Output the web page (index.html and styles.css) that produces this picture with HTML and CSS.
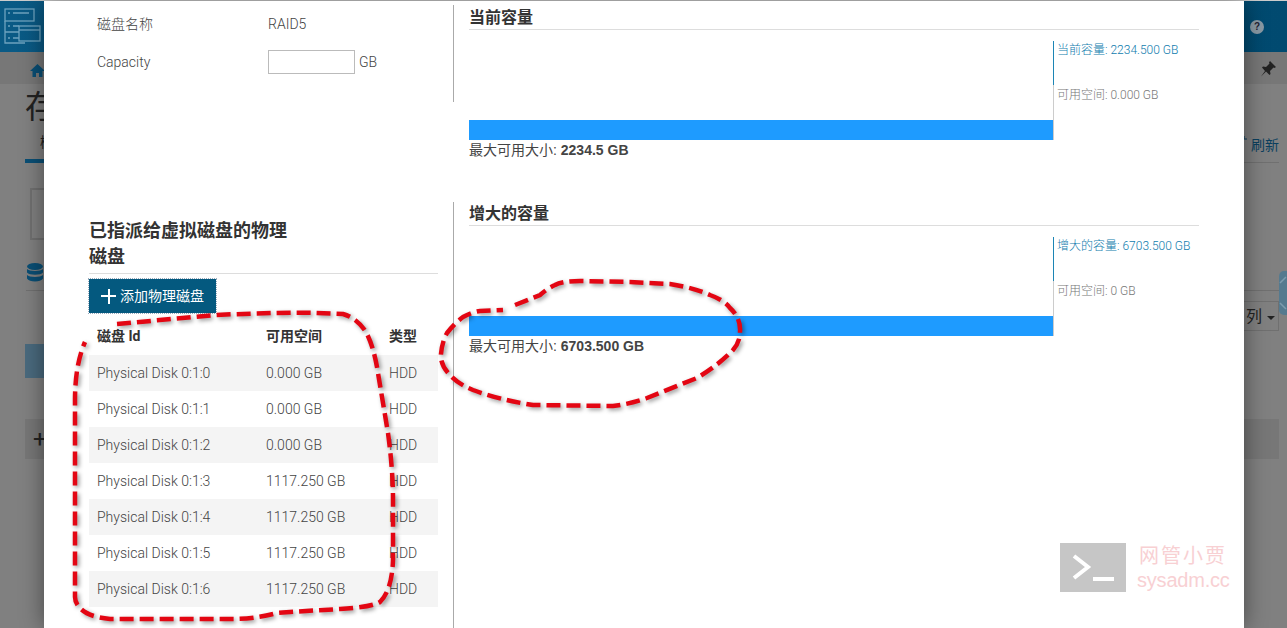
FILE: index.html
```html
<!DOCTYPE html>
<html lang="zh-CN">
<head>
<meta charset="utf-8">
<title>存储</title>
<link rel="stylesheet" href="styles.css">
</head>
<body>
<div class="page">
  <header class="topbar">
    <svg class="logo" width="38" height="38" viewBox="0 0 38 38" fill="none" stroke="#6ea3bf" stroke-width="1.3">
      <rect x="1" y="1" width="29" height="12"/><path d="M4 5h2M9 5h16" stroke-width="1.5"/>
      <path d="M1 13v11h14M1 24v11h20M4 18h2M9 18h6M4 30h2M9 30h6"/>
      <rect x="15" y="18" width="21" height="15"/><path d="M15 22h21"/>
    </svg>
    <span class="help">?</span>
  </header>
  <div class="crumbs">
    <svg class="home" width="15" height="15" viewBox="0 0 15 15"><path d="M7.500 1 0 8h2.500v6h3.500v-4h3v4h3.500V8H15z" fill="#0a4f75"/></svg>
    <svg class="pin" width="16" height="16" viewBox="0 0 16 16"><path d="M10 0l6 6-1.500 1-1-.5L10 10l.5 3-1 1-3.500-3.500L1 15.500l4-5.500L2 6.500l1-1 3 .5 3.500-3.500-.5-1z" fill="#222"/></svg>
  </div>
  <h1 class="page-title">存储</h1>
  <div class="tabs">
    <span class="tab">概览</span>
    <span class="refresh"><svg class="refresh-icon" width="5" height="8" viewBox="0 0 5 8" fill="none" stroke="#0a3f5e" stroke-width="1.200"><path d="M1 0v3h3"/></svg>刷新</span>
  </div>
  <div class="info-box"></div>
  <div class="section-head">
    <svg width="18" height="19" viewBox="0 0 18 19" fill="#0a4f75"><ellipse cx="9" cy="3.500" rx="8" ry="3.500"/><path d="M1 6c2 2.500 14 2.500 16 0v3.500c-2 3-14 3-16 0zM1 12c2 2.500 14 2.500 16 0v3.500c-2 4-14 4-16 0z"/></svg>
  </div>
  <div class="select-row"><span class="select">列<i class="caret"></i></span></div>
  <div class="primary-block"></div>
  <div class="add-bar">+</div>
  <div class="handle"><svg width="8" height="44" viewBox="0 0 8 44" fill="none" stroke="#7d9cae" stroke-width="1.500"><path d="M1 12l6-6M1 32l6 6"/></svg></div>
</div>

<main class="modal">
  <section class="form-panel">
    <div class="form-row"><span class="form-label">磁盘名称</span><span>RAID5</span></div>
    <div class="form-row"><span class="form-label">Capacity</span><input class="cap-input" type="text" aria-label="Capacity"><span class="unit">GB</span></div>
  </section>
  <section class="chart-panel first">
    <h3 class="chart-title">当前容量</h3>
    <div class="chart">
      <div class="plot"><div class="bar"></div></div>
      <div class="legend">
        <div class="legend-item used">当前容量: 2234.500 GB</div>
        <div class="legend-item free">可用空间: 0.000 GB</div>
      </div>
    </div>
    <p class="max">最大可用大小: <b>2234.5 GB</b></p>
  </section>
  <section class="disk-panel">
    <h2 class="disk-title">已指派给虚拟磁盘的物理磁盘</h2>
    <button class="add-btn" type="button"><span class="plus"></span>添加物理磁盘</button>
    <table class="disks">
      <thead><tr><th>磁盘 Id</th><th>可用空间</th><th>类型</th></tr></thead>
      <tbody>
        <tr><td>Physical Disk 0:1:0</td><td>0.000 GB</td><td>HDD</td></tr>
        <tr><td>Physical Disk 0:1:1</td><td>0.000 GB</td><td>HDD</td></tr>
        <tr><td>Physical Disk 0:1:2</td><td>0.000 GB</td><td>HDD</td></tr>
        <tr><td>Physical Disk 0:1:3</td><td>1117.250 GB</td><td>HDD</td></tr>
        <tr><td>Physical Disk 0:1:4</td><td>1117.250 GB</td><td>HDD</td></tr>
        <tr><td>Physical Disk 0:1:5</td><td>1117.250 GB</td><td>HDD</td></tr>
        <tr><td>Physical Disk 0:1:6</td><td>1117.250 GB</td><td>HDD</td></tr>
      </tbody>
    </table>
  </section>
  <section class="chart-panel">
    <h3 class="chart-title">增大的容量</h3>
    <div class="chart">
      <div class="plot"><div class="bar"></div></div>
      <div class="legend">
        <div class="legend-item used">增大的容量: 6703.500 GB</div>
        <div class="legend-item free">可用空间: 0 GB</div>
      </div>
    </div>
    <p class="max">最大可用大小: <b>6703.500 GB</b></p>
  </section>
  <div class="watermark">
    <div class="wm-box"><svg width="66" height="49" viewBox="0 0 66 49" fill="none" stroke="#fff" stroke-width="4"><path d="M14 13l14 11-14 11"/><path d="M33 36h21"/></svg></div>
    <div class="wm-text"><div class="wm-cn">网管小贾</div><div class="wm-en">sysadm.cc</div></div>
  </div>
</main>

<svg class="marks" width="1287" height="628" viewBox="0 0 1287 628" fill="none">
  <path d="M117 324L215 315Q285 312 317 313L343 314Q357 318 366 332Q373 345 377 367L388 433Q393 470 393 500V560Q392 590 380 602Q372 607 340 609L290 612L277 613Q255 619 233 619L110 619Q88 617 80 608Q75 603 75 597V400Q75 365 85 342"/>
  <path d="M515 305L540 295Q548 288 555 285Q562 281 580 281L630 282L670 284Q695 288 710 295Q724 300 730 308Q741 318 740 332Q740 342 733 350Q720 364 697 378L647 398Q630 404 613 406L533 405Q500 400 473 390Q458 384 450 375Q440 365 441 354Q442 342 447 333Q455 323 463 317Q472 312 480 311L503 310"/>
</svg>
</body>
</html>
```

FILE: styles.css
```css
* { box-sizing: border-box; }
html, body { margin: 0; height: 100%; overflow: hidden; }
body {
  position: relative;
  background: #808080;
  font: 300 14px/20px Roboto, "Noto Sans CJK SC", sans-serif;
  color: #444;
}

/* dimmed page behind the dialog */
.page { height: 628px; padding: 0; color: #222; }
.topbar {
  height: 52px;
  border-top: 1px solid #ccc;
  background: linear-gradient(90deg, #0a5a85, #014a70);
  display: flex;
  align-items: center;
  justify-content: space-between;
  padding: 0 23px 0 4px;
}
.help {
  width: 14px; height: 14px; border-radius: 50%;
  background: #8a9aa5; color: #223; font: bold 10px/14px "Liberation Sans", sans-serif;
  text-align: center;
}
.crumbs {
  height: 32px; background: #777;
  display: flex; align-items: center; justify-content: space-between;
  padding: 4px 11px 0 30px;
}
.pin { margin-bottom: 2px; }
.page-title { margin: 0 0 0 25px; font: 400 32px/40px "Noto Sans CJK SC", sans-serif; color: #222; height: 42px; }
.tabs {
  display: flex; justify-content: space-between; align-items: flex-end;
  margin: 0 8px 0 25px; height: 37px; border-bottom: 1px solid #707070;
  position: relative;
}
.tab { width: 60px; height: 31px; border-bottom: 4px solid #0a4f75; padding-left: 15px; margin-bottom: -1px; font-weight: 400; }
.refresh { color: #0a3f5e; line-height: 30px; height: 32px; font-weight: 400; }
.refresh-icon { margin-right: 3px; vertical-align: 6px; }
.info-box { width: 120px; height: 52px; margin: 25px 0 0 30px; border: 2px solid #707070; }
.section-head { margin: 23px 8px 0 26px; height: 28px; border-bottom: 1px solid #707070; }
.select-row { margin: 10px 8px 0 0; display: flex; justify-content: flex-end; height: 30px; }
.select { width: 60px; border: 1px solid #707070; padding: 4px 0 0 26px; font-size: 16px; line-height: 22px; font-weight: 400; white-space: nowrap; }
.caret { display: inline-block; margin-left: 5px; border: 4px solid transparent; border-top-color: #222; border-bottom: 0; vertical-align: 2px; }
.primary-block { width: 80px; height: 34px; margin: 13px 0 0 25px; background: #4a6a7e; }
.add-bar { margin: 41px 8px 0 25px; height: 40px; background: #777; font-size: 24px; line-height: 40px; padding-left: 8px; color: #222; font-weight: 400; }
.handle { position: absolute; top: 271px; left: 1279px; width: 8px; height: 44px; border-radius: 5px 0 0 5px; background: #557a8f; }
.handle svg { display: block; }

/* dialog */
.modal {
  position: absolute; top: 1px; left: 44px;
  width: 1200px; height: 627px;
  background: #fff;
  padding: 0 45px;
  box-shadow: 0 0 22px rgba(0, 0, 0, .45);
  display: grid;
  grid-template-columns: 365px 1fr;
  grid-template-rows: 201px 1fr;
  column-gap: 15px;
  overflow: hidden;
}
.form-panel { margin-top: 4px; height: 97px; border-right: 1px solid #aaa; padding: 7px 0 0 8px; }
.form-row { display: flex; align-items: center; height: 24px; margin-bottom: 14px; }
.form-label { width: 171px; }
.cap-input { width: 87px; height: 24px; border: 1px solid #bbb; background: #fff; padding: 0; margin: 0; }
.unit { margin-left: 4px; }

.chart-panel.first { padding-top: 5px; }
.chart-title {
  margin: 0; height: 24px;
  border-bottom: 1px solid #ddd;
  font-size: 16px; line-height: 24px; font-weight: 700; color: #333;
}
.chart { display: flex; height: 99px; margin-top: 11px; }
.plot { width: 584px; display: flex; align-items: flex-end; }
.bar { width: 100%; height: 20px; background: #1e9bff; }
.legend { flex: 1; font-size: 12px; line-height: 16px; }
.legend-item { padding-left: 3px; border-left: 1px solid #ccc; }
.legend-item.used { height: 44px; padding-top: 1px; color: #0f7cae; border-left-color: #1c85b5; }
.legend-item.free { height: 55px; padding-top: 2px; color: #777; }
.max { margin: 0; font: 14px/20px "Liberation Sans", "Noto Sans CJK SC", sans-serif; color: #444; }

.disk-panel { border-right: 1px solid #aaa; padding-right: 15px; }
.disk-title {
  margin: 0; padding: 16px 140px 3px 0;
  border-bottom: 1px solid #ddd;
  font-size: 18px; line-height: 26px; font-weight: 700; color: #333;
}
.add-btn {
  display: flex; align-items: center;
  width: 127px; height: 34px; margin: 5px 0;
  padding: 0 0 0 12px; border: 0;
  background: #04597f; color: #fff;
  font: 14px/20px Roboto, "Noto Sans CJK SC", sans-serif;
  outline: 1px dotted #9ab; outline-offset: 0;
}
.plus { position: relative; width: 15px; height: 15px; margin-right: 4px; background: linear-gradient(#fff, #fff) center/15px 2px no-repeat, linear-gradient(#fff, #fff) center/2px 15px no-repeat; }
.disks { width: 349px; border-collapse: collapse; table-layout: fixed; }
.disks th, .disks td { padding: 0 0 0 8px; text-align: left; overflow: hidden; white-space: nowrap; }
.disks th { height: 37px; color: #333; font-weight: 700; padding-bottom: 1px; }
.disks td { height: 36px; }
.disks th:nth-child(1) { width: 169px; }
.disks th:nth-child(2) { width: 123px; }
.disks tbody tr:nth-child(odd) { background: #f4f4f4; }

.watermark { position: absolute; left: 1016px; top: 542px; display: flex; gap: 11px; }
.wm-box { width: 66px; height: 49px; background: #c6c6c6; }
.wm-text { color: #f8d0d3; }
.wm-cn { font-size: 20px; line-height: 26px; letter-spacing: 2px; padding-left: 2px; font-weight: 400; }
.wm-en { font: 20px/22px "Liberation Sans", sans-serif; letter-spacing: -.2px; white-space: nowrap; }

.marks { position: absolute; top: 0; left: 0; pointer-events: none; }
.marks path {
  stroke: #e30613; stroke-width: 4.500; stroke-dasharray: 14 6;
  filter: drop-shadow(2px 2px 2px rgba(0, 0, 0, .4));
}
```
